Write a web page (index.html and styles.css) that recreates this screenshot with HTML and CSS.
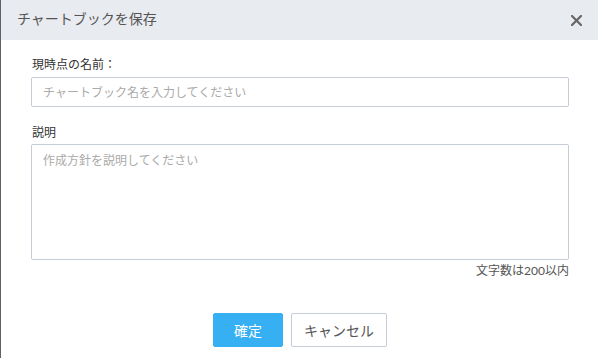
FILE: index.html
```html
<!DOCTYPE html>
<html lang="ja">
<head>
<meta charset="utf-8">
<link rel="stylesheet" href="styles.css">
</head>
<body>
<div class="modal">
  <div class="header">
    <span class="title">チャートブックを保存</span>
    <span class="close" aria-label="close">
      <svg width="11" height="11" viewBox="0 0 11 11"><path d="M1 1 L10 10 M10 1 L1 10" stroke="#666" stroke-width="2.2" stroke-linecap="square"/></svg>
    </span>
  </div>
  <div class="content">
    <label class="label">現時点の名前：</label>
    <input class="input" type="text" placeholder="チャートブック名を入力してください">
    <label class="label label-desc">説明</label>
    <textarea class="textarea" placeholder="作成方針を説明してください"></textarea>
    <div class="counter">文字数は200以内</div>
    <div class="actions">
      <button class="btn btn-primary">確定</button>
      <button class="btn btn-default">キャンセル</button>
    </div>
  </div>
</div>
</body>
</html>
```
FILE: styles.css
```css
html, body {
  margin: 0;
  padding: 0;
  background: #ffffff;
}
body {
  font-family: Lato, "Noto Sans CJK JP", sans-serif;
  color: #333;
}
.modal {
  width: 598px;
  height: 358px;
  box-sizing: border-box;
  border-left: 1px solid #5b6169;
  background: #fff;
}
.header {
  height: 40px;
  background: #e8ebef;
  display: flex;
  align-items: center;
  justify-content: space-between;
  padding: 0 16px 0 16px;
}
.title {
  font-size: 14px;
  color: #555;
  line-height: 18px;
  margin-top: -2px;
}
.close {
  display: flex;
  width: 11px;
  height: 11px;
  margin-top: 0px;
}
.content {
  padding: 16px 29px 0 30px;
  display: flex;
  flex-direction: column;
}
.label {
  font-size: 12px;
  line-height: 18px;
  color: #333;
  margin-bottom: 3px;
  margin-left: 1px;
}
.label-desc {
  margin-top: 17px;
  margin-bottom: 2px;
}
.input, .textarea {
  font-family: Lato, "Noto Sans CJK JP", sans-serif;
  font-size: 12px;
  border: 1px solid #c5ccd6;
  border-radius: 2px;
  box-sizing: border-box;
  width: 100%;
  color: #333;
  outline: none;
  margin: 0;
}
.input {
  height: 30px;
  padding: 0 11px;
}
.textarea {
  height: 116px;
  padding: 6px 11px;
  resize: none;
  display: block;
}
.input::placeholder, .textarea::placeholder {
  color: #aaa;
}
.counter {
  text-align: right;
  font-size: 12px;
  line-height: 18px;
  color: #555;
  margin-top: 2px;
}
.actions {
  display: flex;
  justify-content: center;
  gap: 8px;
  margin-top: 33px;
}
.btn {
  font-family: Lato, "Noto Sans CJK JP", sans-serif;
  font-size: 14px;
  height: 34px;
  border-radius: 2px;
  box-sizing: border-box;
  cursor: pointer;
}
.btn-primary {
  width: 70px;
  background: #36b0f2;
  border: 1px solid #36b0f2;
  color: #fff;
}
.btn-default {
  width: 96px;
  background: #fff;
  border: 1px solid #c5ccd6;
  color: #555;
}
```
